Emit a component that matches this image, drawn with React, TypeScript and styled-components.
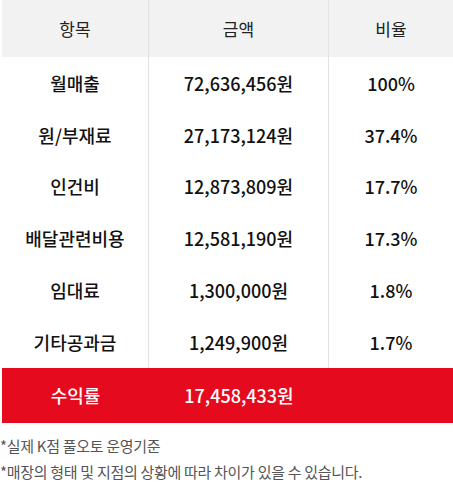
import { Fragment } from 'react';
import styled, { createGlobalStyle } from 'styled-components';

const GlobalStyle = createGlobalStyle`
  html, body {
    margin: 0;
    padding: 0;
    background: #fff;
  }
  body {
    font-family: 'Noto Sans CJK KR', 'Noto Sans', sans-serif;
    color: #1a1a1a;
  }
`;

// ── Table ─────────────────────────────────────────────────────────────────────

const Wrapper = styled.div`
  width: 453px;
`;

const Table = styled.div`
  margin-left: 2px;
  display: grid;
  grid-template-columns: 147px 180px 124px;
`;

const HeadCell = styled.div<{ $last?: boolean }>`
  height: 57px;
  background: #f2f2f2;
  display: flex;
  align-items: center;
  justify-content: center;
  font-size: 17px;
  color: #222;
  border-right: ${({ $last }) => ($last ? 'none' : '1px solid #e2e2e2')};
`;

const Cell = styled.div<{ $last?: boolean }>`
  height: 51.8px;
  display: flex;
  align-items: center;
  justify-content: center;
  font-size: 18px;
  font-weight: 500;
  color: #111;
  border-right: ${({ $last }) => ($last ? 'none' : '1px solid #e2e2e2')};
`;

const TotalCell = styled.div`
  height: 55px;
  background: #e60a1e;
  display: flex;
  align-items: center;
  justify-content: center;
  font-size: 18px;
  font-weight: 500;
  color: #fff;
`;

// ── Footnotes ─────────────────────────────────────────────────────────────────

const Notes = styled.div`
  padding-top: 13px;
  display: flex;
  flex-direction: column;
  gap: 6px;
`;

const Note = styled.p`
  margin: 0;
  font-size: 15px;
  line-height: 20px;
  color: #555;
  letter-spacing: -0.3px;
`;

const rows = [
  ['월매출', '72,636,456원', '100%'],
  ['원/부재료', '27,173,124원', '37.4%'],
  ['인건비', '12,873,809원', '17.7%'],
  ['배달관련비용', '12,581,190원', '17.3%'],
  ['임대료', '1,300,000원', '1.8%'],
  ['기타공과금', '1,249,900원', '1.7%'],
];

export default function App() {
  return (
    <Wrapper>
      <GlobalStyle />
      <Table>
        <HeadCell>항목</HeadCell>
        <HeadCell>금액</HeadCell>
        <HeadCell $last>비율</HeadCell>
        {rows.map(([name, amount, ratio]) => (
          <Fragment key={name}>
            <Cell>{name}</Cell>
            <Cell>{amount}</Cell>
            <Cell $last>{ratio}</Cell>
          </Fragment>
        ))}
        <TotalCell>수익률</TotalCell>
        <TotalCell>17,458,433원</TotalCell>
        <TotalCell />
      </Table>
      <Notes>
        <Note>*실제 K점 풀오토 운영기준</Note>
        <Note>*매장의 형태 및 지점의 상황에 따라 차이가 있을 수 있습니다.</Note>
      </Notes>
    </Wrapper>
  );
}
